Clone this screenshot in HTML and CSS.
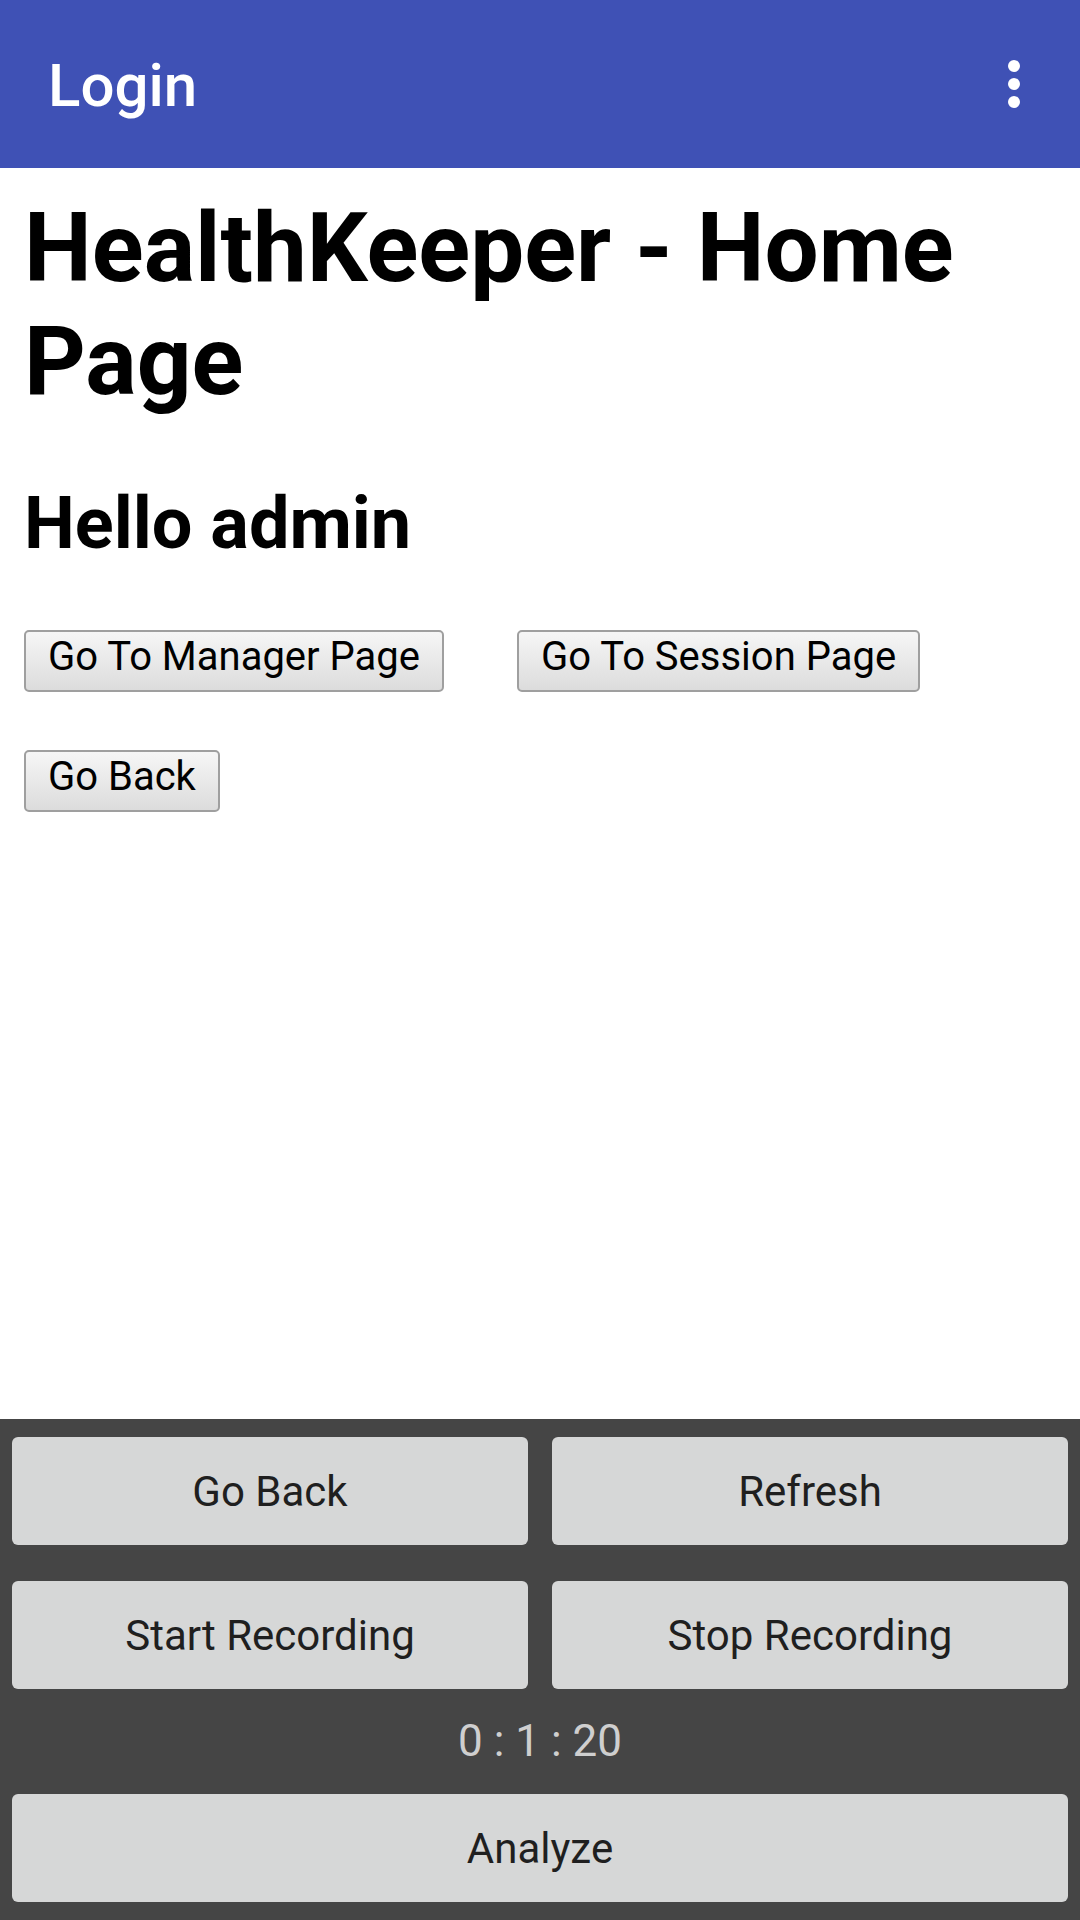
FILE: index.html
```html
<!DOCTYPE html>
<html>
<head>
<meta charset="utf-8">
<link rel="stylesheet" href="styles.css">
</head>
<body>
<div class="screen">
  <header class="appbar">
    <span class="appbar-title">Login</span>
    <svg class="overflow" width="12" height="48" viewBox="0 0 12 48">
      <circle cx="6" cy="6" r="6" fill="#fff"/>
      <circle cx="6" cy="24" r="6" fill="#fff"/>
      <circle cx="6" cy="42" r="6" fill="#fff"/>
    </svg>
  </header>
  <main class="web">
    <h1 class="page-title">HealthKeeper - Home Page</h1>
    <h2 class="greeting">Hello admin</h2>
    <div class="web-row">
      <button class="web-btn">Go To Manager Page</button>
      <button class="web-btn">Go To Session Page</button>
    </div>
    <div class="web-row">
      <button class="web-btn">Go Back</button>
    </div>
  </main>
  <footer class="panel">
    <div class="panel-grid">
      <div class="cell"><button class="panel-btn">Go Back</button></div>
      <div class="cell"><button class="panel-btn">Refresh</button></div>
      <div class="cell"><button class="panel-btn">Start Recording</button></div>
      <div class="cell"><button class="panel-btn">Stop Recording</button></div>
    </div>
    <div class="timer">0 : 1 : 20</div>
    <div class="cell"><button class="panel-btn">Analyze</button></div>
  </footer>
</div>
</body>
</html>
```

FILE: styles.css
```css
html, body {
  margin: 0;
  padding: 0;
  background: #ffffff;
}

.screen {
  width: 1080px;
  height: 1920px;
  display: flex;
  flex-direction: column;
  font-family: Roboto, "Liberation Sans", sans-serif;
  overflow: hidden;
}

.appbar {
  flex: 0 0 168px;
  height: 168px;
  background: #3f51b5;
  display: flex;
  align-items: center;
  justify-content: space-between;
  padding: 0 60px 0 48px;
  box-sizing: border-box;
}

.appbar-title {
  color: #ffffff;
  font-size: 60px;
  font-weight: 500;
  line-height: 70px;
  padding-top: 4px;
}

.overflow {
  display: block;
}

.web {
  flex: 1 1 auto;
  padding: 24px;
  background: #ffffff;
  color: #000000;
}

.page-title {
  margin: 0 0 64px 0;
  font-size: 96px;
  font-weight: 700;
  line-height: 113px;
}

.greeting {
  margin: 0 0 64px 0;
  font-size: 72px;
  font-weight: 700;
  line-height: 84px;
}

.web-row {
  display: flex;
  gap: 73px;
  margin-bottom: 58px;
}

.web-btn {
  font-family: Roboto, "Liberation Sans", sans-serif;
  font-size: 40px;
  line-height: 47px;
  color: #000000;
  padding: 1px 22px 10px;
  border: 2px solid #9f9f9f;
  border-radius: 5px;
  background: linear-gradient(#f6f6f6, #dcdcdc);
  margin: 0;
}

.panel {
  flex: 0 0 501px;
  background: #454545;
  display: flex;
  flex-direction: column;
}

.panel-grid {
  display: grid;
  grid-template-columns: 1fr 1fr;
}

.cell {
  height: 144px;
  padding: 18px 12px;
  box-sizing: border-box;
}

.panel-btn {
  width: 100%;
  height: 100%;
  margin: 0;
  border: none;
  border-radius: 6px;
  background: #d6d7d7;
  color: #1f1f1f;
  font-family: Roboto, "Liberation Sans", sans-serif;
  font-size: 42px;
}

.timer {
  height: 69px;
  line-height: 69px;
  text-align: center;
  color: #cfcfcf;
  font-size: 44px;
}
```
